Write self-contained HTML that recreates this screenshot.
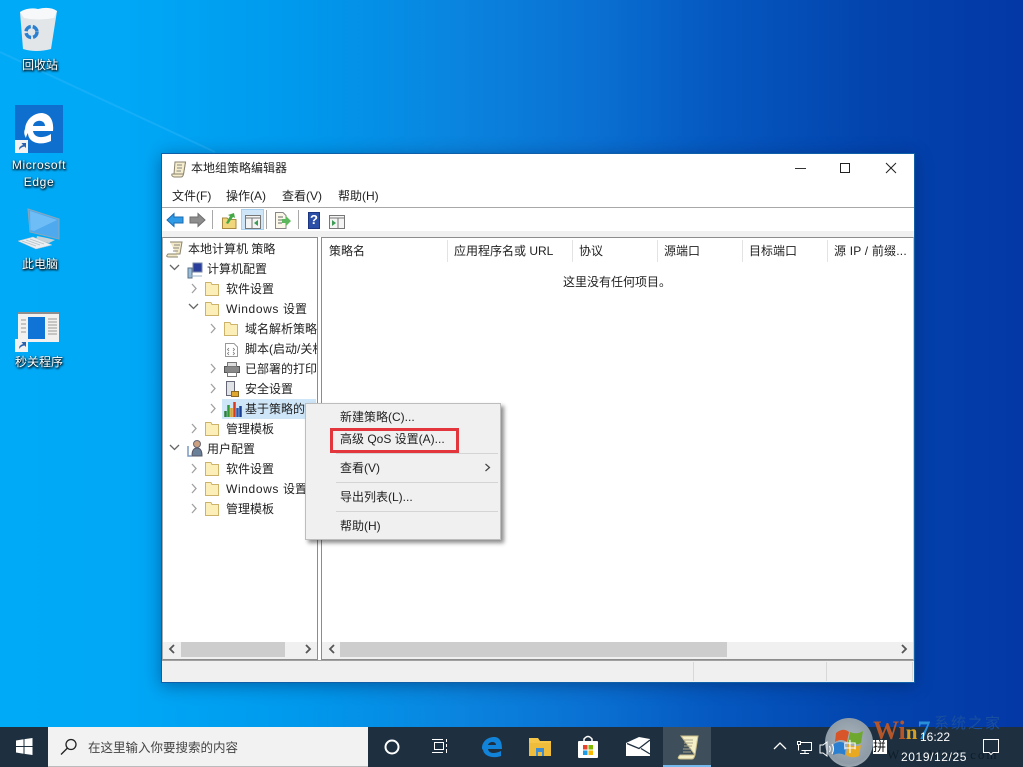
<!DOCTYPE html>
<html><head><meta charset="utf-8">
<style>
html,body{margin:0;padding:0}
#d{position:relative;width:1023px;height:767px;overflow:hidden;font-family:"Liberation Sans","Noto Sans CJK SC",sans-serif;font-size:12px;color:#222;
background:linear-gradient(90deg,#00aaf7 0,#00a8f6 12%,#0098ec 30%,#0a84de 45%,#0a70d2 58%,#0558c0 70%,#0344ae 85%,#0338a6 100%);}
.t{position:absolute;white-space:nowrap;line-height:16px}
.dl{position:absolute;color:#fff;text-align:center;width:76px;line-height:17px;font-size:12px;text-shadow:0 1px 2px #000,1px 1px 2px #000}
.a{position:absolute;box-sizing:border-box}
svg{position:absolute;overflow:visible}
.w{color:#fff}
.ls{letter-spacing:.62px}
</style></head><body><div id="d">
<svg style="left:0;top:0" width="1023" height="767"><path d="M0 52L215 152" stroke="#35b8fb" stroke-width="2" opacity=".4"/></svg>

<!-- desktop icons -->
<svg style="left:18px;top:6px" width="44" height="48"><path d="M2 6L39 5L33 43Q18 47 5 43Z" fill="#e2e6e9"/><path d="M2 6Q10 1 20 3Q32 0 39 5L36 12Q20 15 6 12Z" fill="#f7f8f9"/><circle cx="13.500" cy="26" r="5.500" fill="none" stroke="#2a7fd0" stroke-width="3.500" stroke-dasharray="7 2"/></svg>
<div class="dl" style="left:2px;top:57px">回收站</div>

<div class="a" style="left:15px;top:105px;width:48px;height:48px;background:#0f6fce"></div>
<svg style="left:15px;top:105px" width="48" height="48"><path d="M10 24C11 14 19 8 27 8C36 9 39 17 38 26H18C19 33 28 34 36 29V36C26 41 13 38 13 28C11 31 11 33 11 33Q8 28 10 24ZM18 21H30C30 14 19 14 18 21Z" fill="#fff"/></svg>
<div class="a" style="left:15px;top:140px;width:13px;height:13px;background:#f2f2f2"></div>
<svg style="left:15px;top:140px" width="13" height="13"><path d="M4 10Q4 6 8 5L6.500 3H11V8L9.500 6.500Q6 7 4 10Z" fill="#2a62b0"/></svg>
<div class="dl" style="left:1px;top:157px"><span class="ls">Microsoft</span><br><span class="ls">Edge</span></div>

<svg style="left:0;top:0" width="70" height="260">
<path d="M28 209L59 219V239L30 232Z" fill="#4fa9ee" stroke="#8aa6ba"/>
<path d="M30 211L57 220L34 231L30.500 230Z" fill="#7cc6fa" opacity=".7"/>
<path d="M37 236L47 238L55 240L49 243L36 240Z" fill="#c6d2d9"/>
<path d="M18 241L33 237L52 245L36 249Z" fill="#e8eef1" stroke="#b8c4cb" stroke-width=".5"/>
<path d="M22 241L36 246M26 240L40 245M30 239L44 244" stroke="#b4c0c8" stroke-width=".7"/>
</svg>
<div class="dl" style="left:2px;top:256px">此电脑</div>

<div class="a" style="left:18px;top:312px;width:41px;height:30px;background:#f3f1ef;border-top:2px solid #8d8d8d"></div>
<div class="a" style="left:28px;top:317px;width:17px;height:22px;background:#0f74d6"></div>
<svg style="left:21px;top:318px" width="38" height="20"><path d="M0 2H5M0 6H5M0 10H5M0 14H5M27 1H36M27 4H36M27 7H36M27 10H36M27 13H36M27 16H36" stroke="#999" stroke-width="1"/></svg>
<div class="a" style="left:15px;top:339px;width:13px;height:13px;background:#f2f2f2"></div>
<svg style="left:15px;top:339px" width="13" height="13"><path d="M4 10Q4 6 8 5L6.500 3H11V8L9.500 6.500Q6 7 4 10Z" fill="#2a62b0"/></svg>
<div class="dl" style="left:1px;top:354px">秒关程序</div>

<!-- window -->
<div class="a" style="left:161px;top:153px;width:754px;height:530px;background:#fff;border:1px solid #0e5ea8;box-shadow:0 3px 16px rgba(0,30,80,.45)"></div>
<svg style="left:171px;top:161px" width="16" height="17"><path d="M4 1H14.500L12.500 13Q12 16 10 16H3Q0 15 1 13H10L11 1" fill="#f5edcc" stroke="#8a8470"/><path d="M4 1H14.500L12.500 13H3Z" fill="#f5edcc" stroke="#8a8470"/><path d="M6 4H11M6 7H11M5.500 10H10" stroke="#888"/></svg>
<div class="t" style="left:191px;top:160px">本地组策略编辑器</div>
<svg style="left:790px;top:160px" width="110" height="18"><path d="M5 8.500H16" stroke="#333"/><rect x="50.500" y="3.500" width="9" height="9" fill="none" stroke="#222"/><path d="M96 3L106 13M106 3L96 13" stroke="#222"/></svg>

<div class="t" style="left:172px;top:188px">文件(F)</div>
<div class="t" style="left:226px;top:188px">操作(A)</div>
<div class="t" style="left:282px;top:188px">查看(V)</div>
<div class="t" style="left:338px;top:188px">帮助(H)</div>
<div class="a" style="left:162px;top:207px;width:752px;height:1px;background:#a8a8a8"></div>

<!-- toolbar -->
<div class="a" style="left:241px;top:209px;width:23px;height:21px;background:#cfe6f8;border:1px solid #a8d0ee"></div>
<svg style="left:162px;top:205px" width="200" height="26">
<path d="M5 15L12 8.500V12H21V18H12V21.500Z" fill="#2f9be6" stroke="#1a6bb0"/>
<path d="M43 15L36 8.500V12H28V18H36V21.500Z" fill="#8d8d8d" stroke="#6e6e6e"/>
<path d="M50.500 5V24" stroke="#a8a8a8"/>
<path d="M60.500 13H65L66.500 14.500H74V23.500H60.500Z" fill="#f1d67c" stroke="#a98a40"/>
<path d="M64 18L68 11L66 10L72 8L73 13L71 12L66 19Z" fill="#45a845"/>
<rect x="83.500" y="10.500" width="15" height="13" fill="#f4f4f4" stroke="#777"/><path d="M84 13H98M90 13V23" stroke="#777"/><path d="M96 15L92 18L96 21Z" fill="#3c9a55"/>
<path d="M104.500 5V24" stroke="#a8a8a8"/>
<path d="M113.500 7.500H121L124 10.500V23.500H113.500Z" fill="#fbf8ea" stroke="#888"/><path d="M116 12H121M116 15H120M116 18H120" stroke="#666"/><path d="M120 14H124V11L129 16L124 21V18H120Z" fill="#5cb85c"/>
<path d="M136.500 5V24" stroke="#a8a8a8"/>
<rect x="146.500" y="7.500" width="11" height="16" fill="#2b4ea6" stroke="#1c3580"/>
<rect x="167.500" y="10.500" width="15" height="13" fill="#f4f4f4" stroke="#777"/><path d="M168 13H182M176 13V23" stroke="#777"/><path d="M170 15L174 18L170 21Z" fill="#3c9a55"/>
</svg>
<div class="t" style="left:310px;top:212px;color:#fff;font-weight:bold;font-size:13px">?</div>
<div class="a" style="left:162px;top:231px;width:752px;height:6px;background:#f0f0f0"></div>

<!-- left pane -->
<div class="a" style="left:162px;top:237px;width:156px;height:423px;background:#fff;border:1px solid #8c8c8c;border-left-color:#aaa"></div>
<!-- right pane -->
<div class="a" style="left:321px;top:237px;width:593px;height:423px;background:#fff;border:1px solid #8c8c8c;border-right:1px solid #ccc"></div>

<!-- header -->
<div class="t" style="left:329px;top:243px">策略名</div>
<div class="t" style="left:454px;top:243px">应用程序名或 URL</div>
<div class="t" style="left:579px;top:243px">协议</div>
<div class="t" style="left:664px;top:243px">源端口</div>
<div class="t" style="left:749px;top:243px">目标端口</div>
<div class="t" style="left:834px;top:243px;letter-spacing:.2px">源 IP / 前缀...</div>
<svg style="left:440px;top:238px" width="400" height="26"><path d="M7.500 2V24M132.500 2V24M217.500 2V24M302.500 2V24M387.500 2V24" stroke="#e3e3e3"/></svg>
<div class="t" style="left:563px;top:274px">这里没有任何项目。</div>

<!-- tree -->
<div class="a" style="left:222px;top:399px;width:94px;height:20px;background:#cfe6f8"></div>
<svg style="left:162px;top:238px" width="160" height="282" fill="none">
<g stroke="#a0a0a0" stroke-width="1.300">
<path d="M30 46L34 50.500L30 55"/>
<path d="M49 86L53 90.500L49 95M49 126L53 130.500L49 135M49 146L53 150.500L49 155M49 166L53 170.500L49 175"/>
<path d="M30 186L34 190.500L30 195M30 226L34 230.500L30 235M30 246L34 250.500L30 255M30 266L34 270.500L30 275"/>
</g>
<g stroke="#666" stroke-width="1.300">
<path d="M8 27L12.500 31.500L17 27M27 66L31.500 70.500L36 66M8 207L12.500 211.500L17 207"/>
</g>
<path d="M9 4H21L19 16H7Q4 19 8 19H17" fill="#f3e9c6" stroke="#8a8470" transform="translate(-1,0)"/>
<path d="M12 7H18M11 10H17M11 13H16" stroke="#888"/>
<rect x="31" y="25" width="9" height="9" fill="#2a3f9c" stroke="#7a8aa8"/><path d="M26 30H30V40H26Z" fill="#9ac0dc" stroke="#5a7088"/>
<path d="M27 38H40" stroke="#9ab0c8"/>
<g fill="#fbeeb6" stroke="#cdb36a">
<path d="M43.500 44.500H49L50 46.500H56.500V57.500H43.500Z"/>
<path d="M43.500 64.500H49L50 66.500H56.500V77.500H43.500Z"/>
<path d="M62.500 84.500H68L69 86.500H75.500V97.500H62.500Z"/>
<path d="M43.500 184.500H49L50 186.500H56.500V197.500H43.500Z"/>
<path d="M43.500 224.500H49L50 226.500H56.500V237.500H43.500Z"/>
<path d="M43.500 244.500H49L50 246.500H56.500V257.500H43.500Z"/>
<path d="M43.500 264.500H49L50 266.500H56.500V277.500H43.500Z"/>
</g>
<path d="M63.500 105.500H72L75.500 109V118.500H63.500Z" fill="#fff" stroke="#999"/><path d="M67 110L65.500 111.500L67 113M71 110L72.500 111.500L71 113M67 114L65.500 115.500L67 117M71 114L72.500 115.500L71 117" stroke="#777" stroke-width=".8"/>
<rect x="62.500" y="128.500" width="15" height="6" fill="#888" stroke="#555"/><rect x="65.500" y="124.500" width="9" height="4" fill="#ddd" stroke="#777"/><rect x="65.500" y="134.500" width="9" height="4" fill="#fff" stroke="#777"/>
<rect x="64.500" y="143.500" width="8" height="14" fill="#dfe3e6" stroke="#667"/><rect x="69.500" y="153.500" width="7" height="5" fill="#e0a830" stroke="#8a6a20"/>
<path d="M63.500 179V173" stroke="#2a7f3a" stroke-width="2.500"/><path d="M66.500 179V167" stroke="#2a9a3a" stroke-width="2.500"/><path d="M69.500 179V170" stroke="#e0a020" stroke-width="2.500"/><path d="M72.500 179V164" stroke="#d83a20" stroke-width="2.500"/><path d="M75.500 179V170" stroke="#2a5ab0" stroke-width="2.500"/><path d="M78.500 179V168" stroke="#1a3f90" stroke-width="2.500"/>
<circle cx="35" cy="206" r="3.500" fill="#caa080" stroke="#667"/><path d="M30 218Q30 210 35 210Q40 210 40 218Z" fill="#6a7f98" stroke="#556"/><path d="M26 208V218H30" stroke="#7a9ac0" stroke-width="1.500"/>
</svg>
<div class="t" style="left:188px;top:241px">本地计算机 策略</div>
<div class="t" style="left:207px;top:261px">计算机配置</div>
<div class="t" style="left:226px;top:281px">软件设置</div>
<div class="t" style="left:226px;top:301px"><span class="ls">Windows </span>设置</div>
<div class="t" style="left:245px;top:321px;width:72px;overflow:hidden">域名解析策略</div>
<div class="t" style="left:245px;top:341px;width:72px;overflow:hidden">脚本(启动/关机)</div>
<div class="t" style="left:245px;top:361px;width:72px;overflow:hidden">已部署的打印机</div>
<div class="t" style="left:245px;top:381px">安全设置</div>
<div class="t" style="left:245px;top:401px">基于策略的 QoS</div>
<div class="t" style="left:226px;top:421px">管理模板</div>
<div class="t" style="left:207px;top:441px">用户配置</div>
<div class="t" style="left:226px;top:461px">软件设置</div>
<div class="t" style="left:226px;top:481px"><span class="ls">Windows </span>设置</div>
<div class="t" style="left:226px;top:501px">管理模板</div>

<!-- scrollbars -->
<div class="a" style="left:163px;top:642px;width:154px;height:17px;background:#f0f0f0"></div>
<div class="a" style="left:181px;top:642px;width:104px;height:15px;background:#cdcdcd"></div>
<div class="a" style="left:322px;top:642px;width:591px;height:17px;background:#f0f0f0"></div>
<div class="a" style="left:340px;top:642px;width:387px;height:15px;background:#cdcdcd"></div>
<svg style="left:160px;top:640px" width="760" height="20" fill="none" stroke="#555" stroke-width="1.800"><path d="M14 5L10 9L14 13M146 5L150 9L146 13M174 5L170 9L174 13M742 5L746 9L742 13"/></svg>

<!-- status bar -->
<div class="a" style="left:162px;top:660px;width:752px;height:22px;background:#f0f0f0;border-top:1px solid #a0a0a0"></div>
<div class="a" style="left:693px;top:662px;width:1px;height:19px;background:#d8d8d8"></div>
<div class="a" style="left:826px;top:662px;width:1px;height:19px;background:#d8d8d8"></div>
<div class="a" style="left:912px;top:662px;width:1px;height:19px;background:#d8d8d8"></div>

<!-- context menu -->
<div class="a" style="left:305px;top:403px;width:196px;height:137px;background:#f0f0f0;border:1px solid #bdbdbd;box-shadow:3px 3px 4px rgba(0,0,0,.45)"></div>
<div class="t" style="left:340px;top:409px">新建策略(C)...</div>
<div class="t" style="left:340px;top:431px">高级 QoS 设置(A)...</div>
<div class="t" style="left:340px;top:460px">查看(V)</div>
<div class="t" style="left:340px;top:489px">导出列表(L)...</div>
<div class="t" style="left:340px;top:518px">帮助(H)</div>
<div class="a" style="left:336px;top:453px;width:162px;height:1px;background:#d4d4d4"></div>
<div class="a" style="left:336px;top:482px;width:162px;height:1px;background:#d4d4d4"></div>
<div class="a" style="left:336px;top:511px;width:162px;height:1px;background:#d4d4d4"></div>
<svg style="left:484px;top:463px" width="8" height="10" fill="none" stroke="#444" stroke-width="1.200"><path d="M1.500 1L5.500 4.500L1.500 8"/></svg>
<div class="a" style="left:330px;top:428px;width:129px;height:25px;border:3px solid #e2363c"></div>

<!-- taskbar -->
<div class="a" style="left:0;top:727px;width:1023px;height:40px;background:#1e3040"></div>
<svg style="left:16px;top:738px" width="17" height="17"><path d="M0 2.500L7.500 1.300V8H0ZM8.500 1.100L16.500 0V8H8.500ZM0 9H7.500V15.700L0 14.500ZM8.500 9H16.500V17L8.500 15.900Z" fill="#fff"/></svg>
<div class="a" style="left:48px;top:727px;width:320px;height:40px;background:#f2f2f2;border-bottom:1px solid #bbb"></div>
<svg style="left:60px;top:738px" width="18" height="18" fill="none" stroke="#222" stroke-width="1.300"><circle cx="11" cy="6.500" r="5"/><path d="M7.500 10L1 16.500"/></svg>
<div class="t" style="left:88px;top:740px;font-size:12.500px;color:#444">在这里输入你要搜索的内容</div>
<svg style="left:384px;top:739px" width="16" height="16" fill="none" stroke="#fff" stroke-width="2"><circle cx="8" cy="8" r="6.500"/></svg>
<svg style="left:431px;top:738px" width="18" height="17" fill="none" stroke="#fff"><path d="M1 1.500H12M3.500 4.500H12.500V11.500H3.500ZM1 14.500H12M15.500 1V4M15.500 6V9M15.500 11V15"/></svg>
<svg style="left:481px;top:736px" width="22" height="22"><path d="M1 11C2 4 8 1 13 1C19 1 21 6 21 13H7C8 18 14 18 20 15V20C12 23 2 20 2 13Q1 15 1 11ZM7 9H15C15 5 8 5 7 9Z" fill="#1183d9"/></svg>
<svg style="left:529px;top:737px" width="22" height="20"><path d="M0 1H9L11 4H22V8H0Z" fill="#f6c648"/><path d="M0 6H22V19H0Z" fill="#f0bc3c"/><rect x="7" y="11" width="8" height="8" fill="#3d8cd2"/><rect x="9" y="15" width="4" height="4" fill="#f0bc3c"/></svg>
<svg style="left:577px;top:735px" width="22" height="24"><path d="M7 7V4Q11 -1 15 4V7" fill="none" stroke="#fff" stroke-width="1.500"/><rect x="1" y="6" width="20" height="17" rx="1" fill="#fff"/><rect x="6" y="10" width="4.500" height="4.500" fill="#e8432f"/><rect x="11.500" y="10" width="4.500" height="4.500" fill="#7fba00"/><rect x="6" y="15.500" width="4.500" height="4.500" fill="#1c9ee8"/><rect x="11.500" y="15.500" width="4.500" height="4.500" fill="#fbb800"/></svg>
<svg style="left:626px;top:737px" width="25" height="20"><path d="M0 6L13 0L24 2V19H0Z" fill="#fff"/><path d="M1 6.500L13 11.500L24 3M15 11.500L24 17" stroke="#1e3040" stroke-width="1.300" fill="none"/></svg>
<div class="a" style="left:663px;top:727px;width:48px;height:40px;background:#3e4e5a;border-bottom:2px solid #76b9ed"></div>
<svg style="left:676px;top:735px" width="23" height="25"><path d="M5 1H22L19 20H4Q0 24 5 24H16Q18 24 19 20Z" fill="#f5efc8" stroke="#c8bc8a"/><path d="M8 5H17M8 8H17M8 11H16M7 14H15M7 17H15" stroke="#a8a48c"/></svg>

<!-- watermark -->
<div class="t" style="left:934px;top:716px;font-size:15px;line-height:16px;letter-spacing:2px;color:#1a4f9e">系统之家</div>
<div class="a" style="left:825px;top:718px;width:48px;height:49px;border-radius:50%;background:radial-gradient(circle at 50% 45%,#a8b4bc,#8e9ba6 65%,#c0c9ce)"></div>
<svg style="left:834px;top:725px" width="30" height="34"><path d="M2 8Q9 2 15 7L13 17Q7 13 1 17Z" fill="#d8552a"/><path d="M16 7Q23 10 29 6L27 18Q21 21 14 17Z" fill="#6fa82e"/><path d="M0 19Q6 15 12 19L11 30Q5 27 -1 30Z" fill="#2a7fd0"/><path d="M14 19Q21 23 27 20L25 31Q18 34 12 30Z" fill="#e8a820"/></svg>

<!-- tray -->
<svg style="left:770px;top:735px" width="115" height="28" fill="none" stroke="#fff">
<path d="M4 14L10 8L16 14" stroke-width="1.300"/>
<rect x="27.500" y="6.500" width="3" height="3"/><path d="M31 7.500H41.500V15.500H31.500M35 15.500V18M30 18.500H39M28.500 10V15.500"/>
<path d="M50 10H53L57 7V21L53 18H50Z"/><path d="M59.500 11Q61 14 59.500 17M62 9Q65 14 62 19"/>
</svg>
<div class="t w" style="left:843px;top:739px;font-size:14px;line-height:16px">中</div>
<div class="a" style="left:873px;top:740px;width:14px;height:14px;background:#fff"></div>
<div class="t" style="left:873px;top:739px;color:#111;font-size:13px;line-height:15px">拼</div>
<div class="t" style="left:873px;top:718px;font-family:'Liberation Serif',serif;font-weight:bold;font-size:26px;line-height:26px;color:#b5552a">Wi<span style="color:#d8a020;font-size:21px">n</span><span style="color:#2a8fd8">7</span></div>
<div class="t" style="left:887px;top:748px;font-family:'Liberation Serif',serif;font-size:13px;color:#0d1c28;line-height:14px;letter-spacing:2px">Www.Win7.com</div>
<div class="t w" style="left:920px;top:729px;font-size:12px;line-height:16px">16:22</div>
<div class="t w" style="left:901px;top:749px;font-size:12px;line-height:16px;letter-spacing:.6px">2019/12/25</div>
<svg style="left:982px;top:738px" width="18" height="18" fill="none" stroke="#fff"><path d="M1.500 1.500H16.500V14.500H11L9 16.500L7 14.500H1.500Z"/></svg>
</div></body></html>
